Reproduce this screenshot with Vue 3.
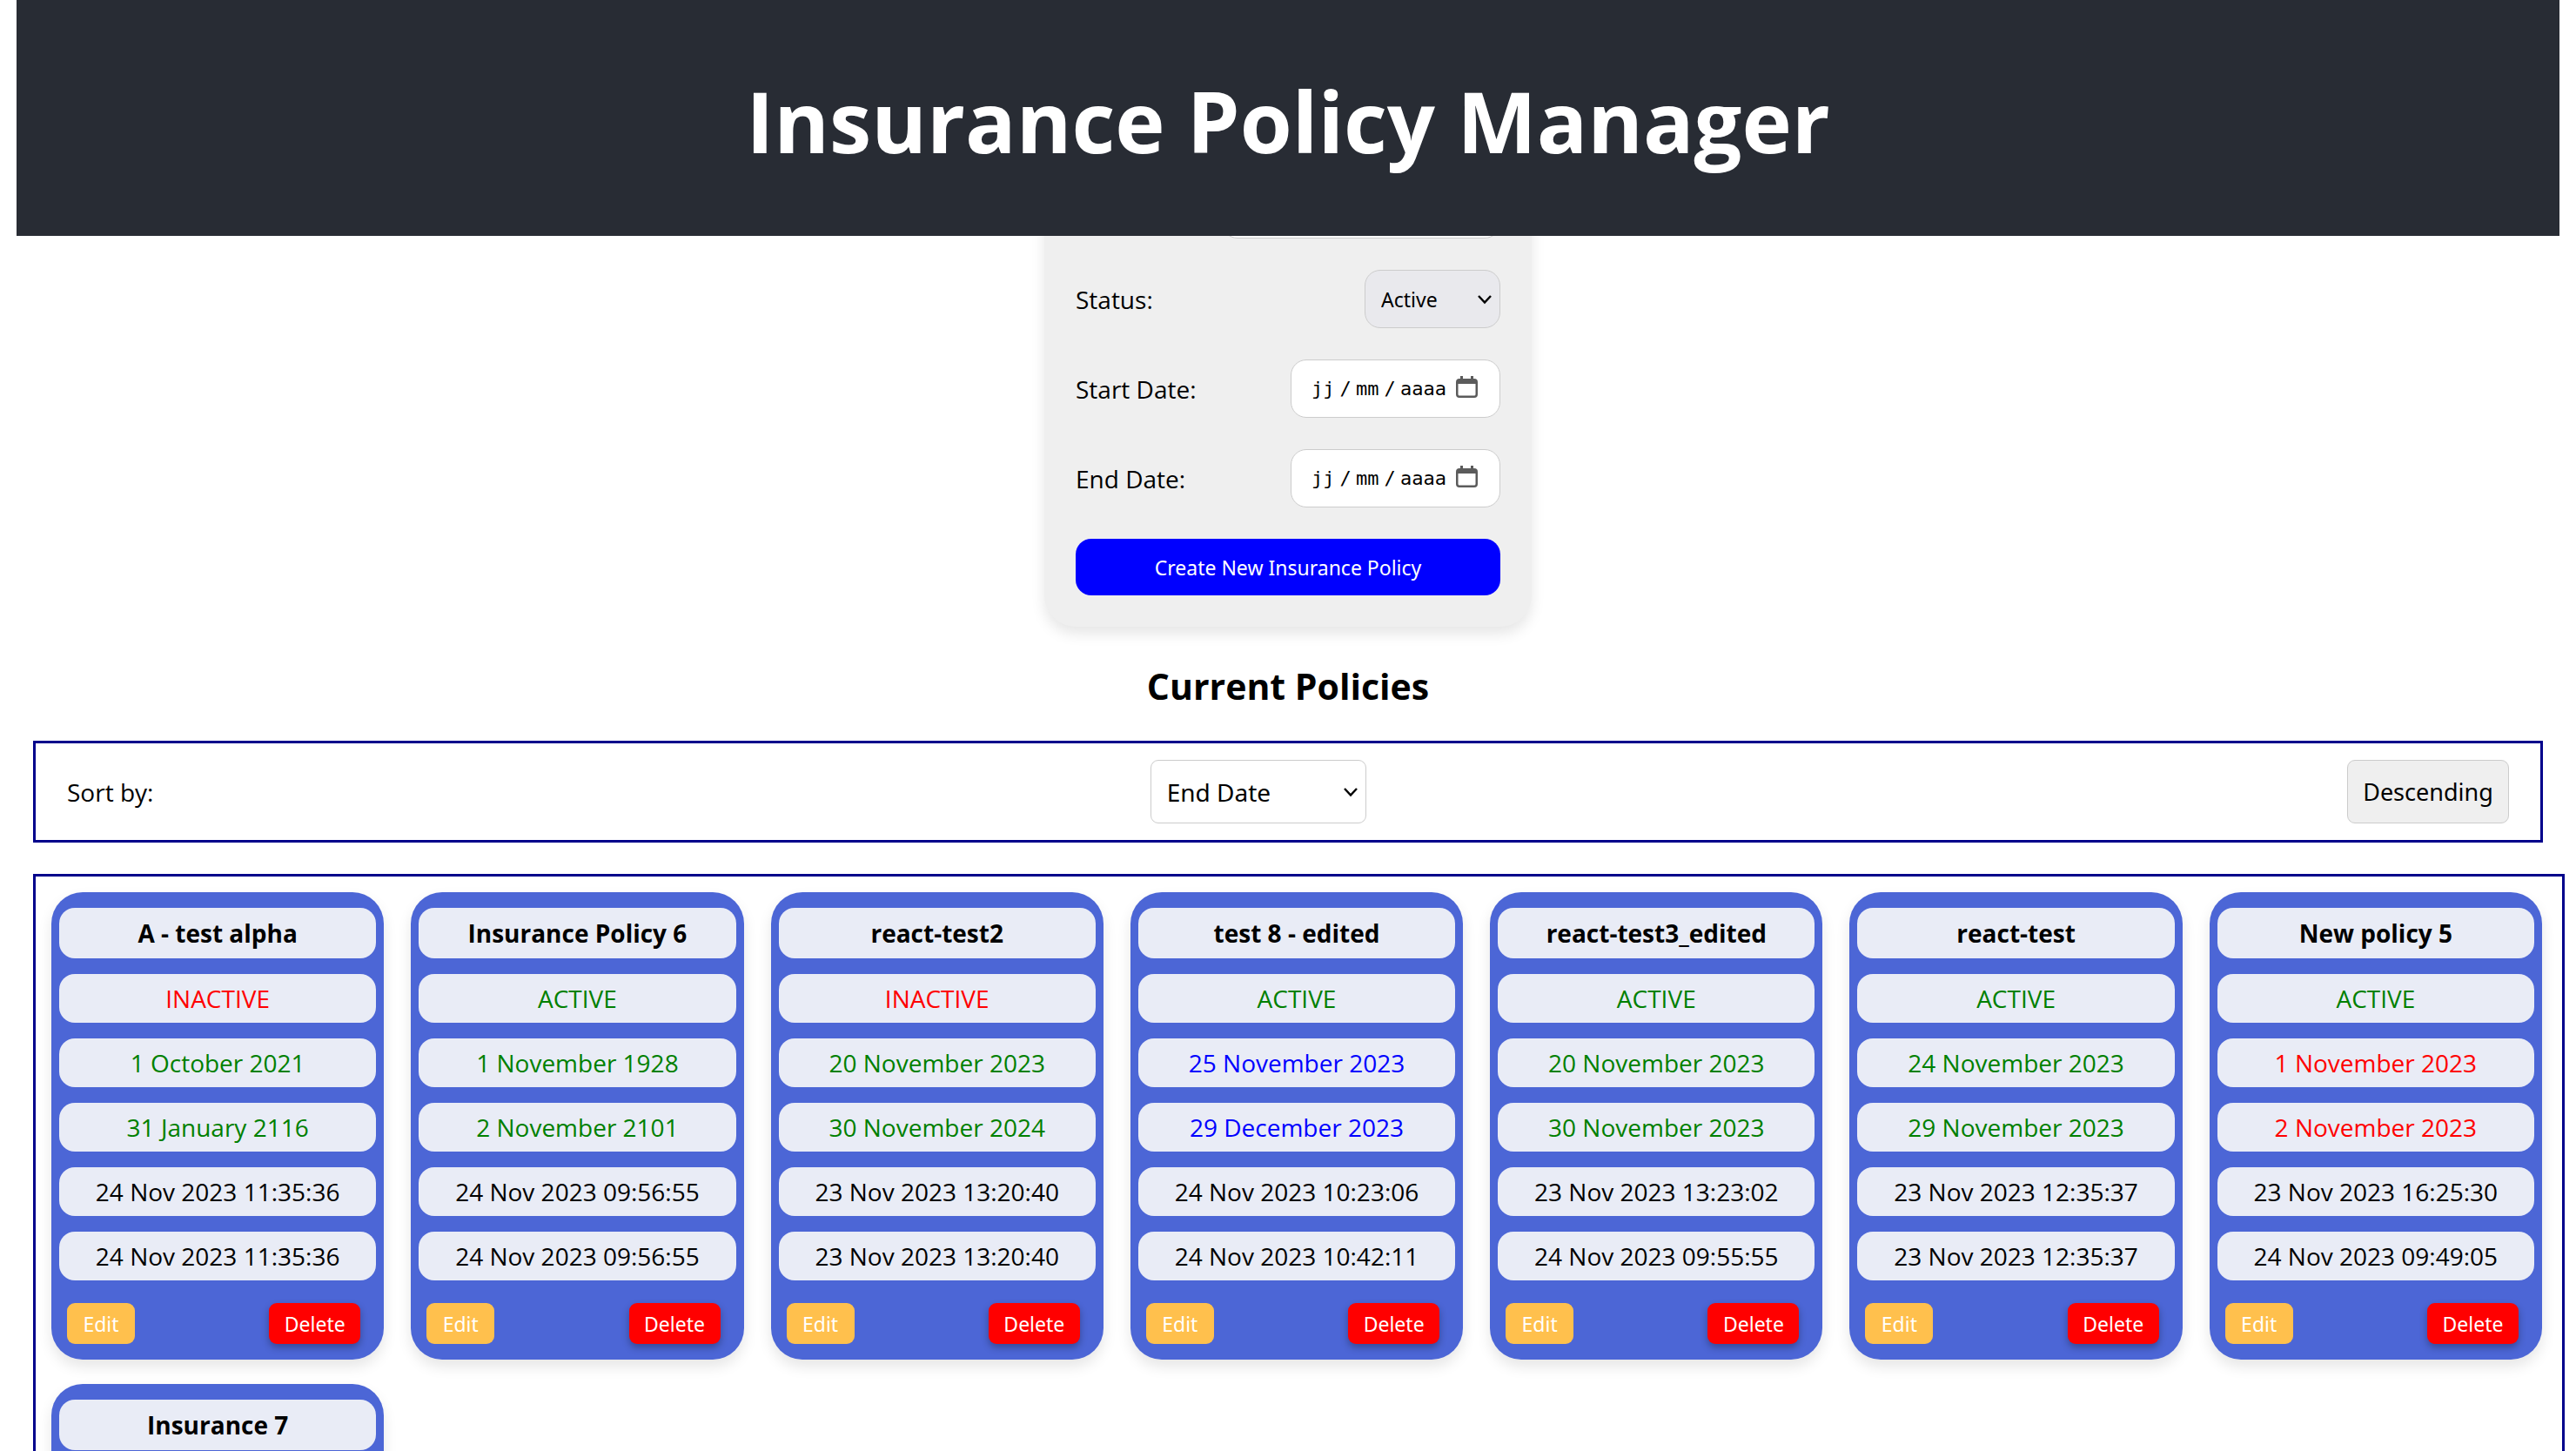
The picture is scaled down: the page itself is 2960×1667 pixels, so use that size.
<script setup>
import { ref } from 'vue'

const status = ref('Active')
const name = ref('')
const sortBy = ref('End Date')

const policies = [
  { name: 'A - test alpha', rows: [['INACTIVE', 'red'], ['1 October 2021', 'green'], ['31 January 2116', 'green'], ['24 Nov 2023 11:35:36'], ['24 Nov 2023 11:35:36']] },
  { name: 'Insurance Policy 6', rows: [['ACTIVE', 'green'], ['1 November 1928', 'green'], ['2 November 2101', 'green'], ['24 Nov 2023 09:56:55'], ['24 Nov 2023 09:56:55']] },
  { name: 'react-test2', rows: [['INACTIVE', 'red'], ['20 November 2023', 'green'], ['30 November 2024', 'green'], ['23 Nov 2023 13:20:40'], ['23 Nov 2023 13:20:40']] },
  { name: 'test 8 - edited', rows: [['ACTIVE', 'green'], ['25 November 2023', 'blue'], ['29 December 2023', 'blue'], ['24 Nov 2023 10:23:06'], ['24 Nov 2023 10:42:11']] },
  { name: 'react-test3_edited', rows: [['ACTIVE', 'green'], ['20 November 2023', 'green'], ['30 November 2023', 'green'], ['23 Nov 2023 13:23:02'], ['24 Nov 2023 09:55:55']] },
  { name: 'react-test', rows: [['ACTIVE', 'green'], ['24 November 2023', 'green'], ['29 November 2023', 'green'], ['23 Nov 2023 12:35:37'], ['23 Nov 2023 12:35:37']] },
  { name: 'New policy 5', rows: [['ACTIVE', 'green'], ['1 November 2023', 'red'], ['2 November 2023', 'red'], ['23 Nov 2023 16:25:30'], ['24 Nov 2023 09:49:05']] },
  { name: 'Insurance 7', rows: [['ACTIVE', 'green']] },
]

const dateFields = [
  { id: 'start', label: 'Start Date:' },
  { id: 'end', label: 'End Date:' },
]
</script>

<template>
  <div class="page">
    <header class="header">
      <h1>Insurance Policy Manager</h1>
    </header>

    <form class="policy-form" @submit.prevent>
      <div class="field">
        <input id="name" v-model="name" class="control name-input" type="text" aria-label="Name" />
      </div>
      <div class="field">
        <label for="status">Status:</label>
        <div class="select-wrap">
          <select id="status" v-model="status" class="control status-select">
            <option>Active</option>
            <option>Inactive</option>
          </select>
          <svg class="chevron" viewBox="0 0 16 12"><path d="M1 2 L8 9.500 L15 2" /></svg>
        </div>
      </div>
      <div v-for="field in dateFields" :key="field.id" class="field">
        <label :for="field.id">{{ field.label }}</label>
        <div class="control date">
          <input :id="field.id" class="part" type="text" placeholder="jj" maxlength="2" />
          <span class="slash">/</span>
          <input class="part" type="text" placeholder="mm" maxlength="2" :aria-label="field.label + ' month'" />
          <span class="slash">/</span>
          <input class="part year" type="text" placeholder="aaaa" maxlength="4" :aria-label="field.label + ' year'" />
          <svg class="calendar" viewBox="0 0 25 25">
            <path fill-rule="evenodd" d="M5 0h3v3h9V0h3v3h1a4 4 0 0 1 4 4v14a4 4 0 0 1-4 4H4a4 4 0 0 1-4-4V7a4 4 0 0 1 4-4h1zM2.500 9v12a1.500 1.500 0 0 0 1.500 1.500h17a1.500 1.500 0 0 0 1.500-1.500V9z" />
          </svg>
        </div>
      </div>
      <button class="create" type="submit">Create New Insurance Policy</button>
    </form>

    <main>
      <h2>Current Policies</h2>
      <section class="sort-bar">
        <label class="sort-label" for="sort">Sort by:</label>
        <div class="select-wrap">
          <select id="sort" v-model="sortBy" class="sort-select">
            <option>End Date</option>
            <option>Start Date</option>
            <option>Name</option>
          </select>
          <svg class="chevron" viewBox="0 0 16 12"><path d="M1 2 L8 9.500 L15 2" /></svg>
        </div>
        <button class="order" type="button">Descending</button>
      </section>

      <section class="grid">
        <article v-for="policy in policies" :key="policy.name" class="card">
          <h3 class="pill name">{{ policy.name }}</h3>
          <p v-for="(row, i) in policy.rows" :key="i" class="pill" :class="row[1]">{{ row[0] }}</p>
          <div class="actions">
            <button class="edit" type="button">Edit</button>
            <button class="delete" type="button">Delete</button>
          </div>
        </article>
      </section>
    </main>
  </div>
</template>

<style>
body {
  margin: 0;
  background: #fff;
}
</style>

<style scoped>
* {
  box-sizing: border-box;
}

.page {
  height: 100vh;
  overflow: hidden;
  color: #000;
  font-family: "Open Sans", "Noto Sans", sans-serif;
  font-size: 28px;
  line-height: 38px;
}

button,
select,
input {
  margin: 0;
  color: #000;
  font-family: "Noto Sans", "Open Sans", sans-serif;
}

.header {
  position: relative;
  z-index: 1;
  display: flex;
  justify-content: center;
  margin: 0 19px;
  padding: 71px 0 65px;
  background: #282c34;
}

h1 {
  margin: 0;
  color: #fff;
  font-size: 97px;
  line-height: 135px;
}

.policy-form {
  display: flex;
  flex-direction: column;
  gap: 36px;
  width: 560px;
  margin: -100px auto 0;
  padding: 36px;
  border-radius: 36px;
  background: #efefef;
  box-shadow: 0 8px 16px rgba(0, 0, 0, 0.1);
}

.field {
  display: flex;
  align-items: center;
  justify-content: space-between;
}

.control {
  height: 67px;
  border: 1px solid #ccc;
  border-radius: 18px;
  background: #fff;
}

.name-input {
  width: 320px;
  margin-left: auto;
}

.select-wrap {
  position: relative;
  display: flex;
}

select {
  appearance: none;
  padding: 0 18px;
}

.status-select {
  width: 156px;
  background: #e9e9ed;
  font-size: 23px;
}

.chevron {
  position: absolute;
  top: 50%;
  right: 10px;
  width: 16px;
  height: 12px;
  margin-top: -6px;
  fill: none;
  stroke: #000;
  stroke-width: 2.5;
  pointer-events: none;
}

.date {
  display: flex;
  align-items: center;
  width: 241px;
  padding: 0 25px 0 23px;
  font-family: "DejaVu Sans Mono", monospace;
  font-size: 22px;
}

.part {
  width: 27px;
  padding: 0;
  border: 0;
  background: none;
  font-family: inherit;
  font-size: inherit;
}

.year {
  width: 54px;
}

.part::placeholder {
  color: #000;
  opacity: 1;
}

.slash {
  width: 24px;
  text-align: center;
}

.calendar {
  width: 25px;
  height: 25px;
  margin: 0 0 4px auto;
  fill: #5b5b5b;
}

.create {
  height: 65px;
  border: 0;
  border-radius: 18px;
  background: #00f;
  color: #fff;
  font-size: 23px;
}

h2 {
  margin: 46px 0 40px;
  font-size: 41px;
  line-height: 45px;
  text-align: center;
}

.sort-bar {
  display: flex;
  align-items: center;
  justify-content: space-between;
  margin: 0 38px 36px;
  padding: 19px 36px;
  border: 3px solid #00008b;
}

.sort-label {
  padding-right: 18px;
}

.sort-select {
  width: 248px;
  height: 73px;
  border: 1px solid #ccc;
  border-radius: 9px;
  background: #fff;
  font-size: 28px;
}

.order {
  width: 186px;
  height: 73px;
  padding: 0;
  border: 1px solid #ccc;
  border-radius: 9px;
  background: #efefef;
  font-size: 27px;
}

.grid {
  display: grid;
  grid-template-columns: repeat(auto-fill, minmax(360px, 1fr));
  gap: 28px 31px;
  margin: 0 13px 0 38px;
  padding: 18px 23px 18px 18px;
  border: 3px solid #00008b;
}

.card {
  display: flex;
  flex-direction: column;
  gap: 18px;
  padding: 18px 9px;
  border-radius: 36px;
  background: #4c66d6;
  box-shadow: 0 8px 16px rgba(0, 0, 0, 0.1);
}

.pill {
  margin: 0;
  padding: 9px;
  border-radius: 18px;
  background: #e9ecf6;
  font-size: 28px;
  font-weight: 400;
  text-align: center;
}

.name {
  padding: 10px 9px;
  font-weight: 700;
}

.red {
  color: #f00;
}

.green {
  color: #008000;
}

.blue {
  color: #00f;
}

.actions {
  display: flex;
  justify-content: space-between;
  padding: 8px 18px 0 9px;
}

.edit,
.delete {
  height: 47px;
  padding: 0;
  border: 0;
  border-radius: 9px;
  color: #fff;
  font-size: 23px;
}

.edit {
  width: 78px;
  background: #ffc04d;
}

.delete {
  width: 105px;
  background: #f00;
  box-shadow: 0 4px 8px rgba(0, 0, 0, 0.3);
}
</style>
